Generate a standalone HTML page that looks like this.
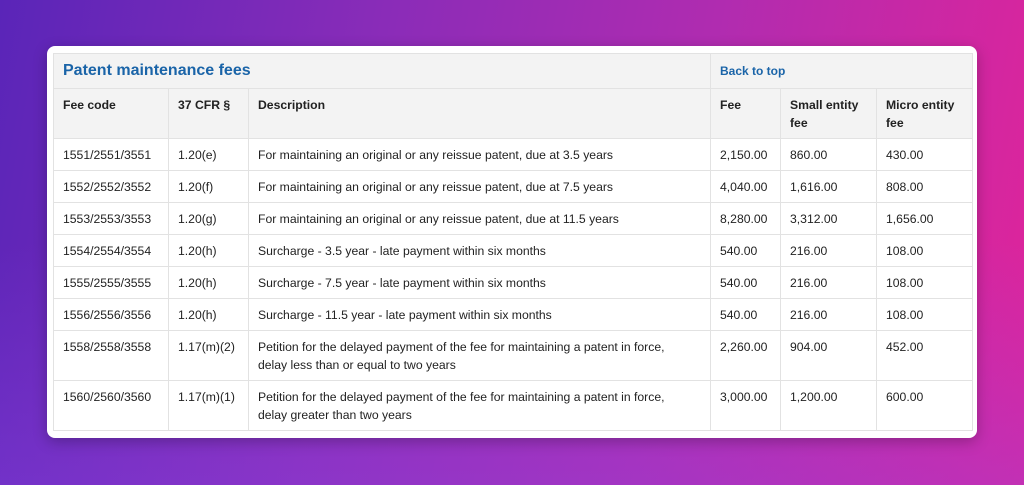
<!DOCTYPE html>
<html><head><style>
html,body{margin:0;width:1024px;height:485px;overflow:hidden;}
body{background:linear-gradient(100deg,#5a25b8 0%,#8a2cb8 35%,#b02cb0 65%,#e0249a 100%);position:relative;font-family:"Liberation Sans",sans-serif;}
.ov{position:absolute;inset:0;background:linear-gradient(180deg,rgba(0,0,0,0) 50%,rgba(140,70,230,0.35) 100%);}
.card{position:absolute;left:47px;top:46px;width:930px;height:392px;background:#fff;border-radius:8px;box-shadow:0 4px 14px rgba(0,0,0,0.25);}
table{position:absolute;left:6px;top:7px;border-collapse:collapse;font-size:12.2px;color:#222;table-layout:fixed;}
td,th{border:1px solid #e2e2e2;padding:0 0 0 9px;text-align:left;vertical-align:top;line-height:18px;}
th{background:#f3f3f3;font-weight:bold;padding-top:7px;}
tr.t td{background:#f3f3f3;height:34px;vertical-align:middle;padding-top:0}
tr.h th{height:42px;}
tr.r td{height:31px;vertical-align:middle;}
tr.r2 td{height:42px;padding-top:7px;}
.title{color:#1a64a8;font-size:16px;font-weight:bold;}
.btt{color:#1a64a8;font-weight:bold;font-size:12px;}
</style></head><body><div class="ov"></div>
<div class="card"><table>
<colgroup><col style="width:115px"><col style="width:80px"><col style="width:462px"><col style="width:70px"><col style="width:96px"><col style="width:96px"></colgroup>
<tr class="t"><td colspan="3" class="title">Patent maintenance fees</td><td colspan="3" class="btt">Back to top</td></tr>
<tr class="h"><th>Fee code</th><th>37 CFR §</th><th>Description</th><th>Fee</th><th>Small entity fee</th><th>Micro entity fee</th></tr>
<tr class="r"><td>1551/2551/3551</td><td>1.20(e)</td><td>For maintaining an original or any reissue patent, due at 3.5 years</td><td>2,150.00</td><td>860.00</td><td>430.00</td></tr>
<tr class="r"><td>1552/2552/3552</td><td>1.20(f)</td><td>For maintaining an original or any reissue patent, due at 7.5 years</td><td>4,040.00</td><td>1,616.00</td><td>808.00</td></tr>
<tr class="r"><td>1553/2553/3553</td><td>1.20(g)</td><td>For maintaining an original or any reissue patent, due at 11.5 years</td><td>8,280.00</td><td>3,312.00</td><td>1,656.00</td></tr>
<tr class="r"><td>1554/2554/3554</td><td>1.20(h)</td><td>Surcharge - 3.5 year - late payment within six months</td><td>540.00</td><td>216.00</td><td>108.00</td></tr>
<tr class="r"><td>1555/2555/3555</td><td>1.20(h)</td><td>Surcharge - 7.5 year - late payment within six months</td><td>540.00</td><td>216.00</td><td>108.00</td></tr>
<tr class="r"><td>1556/2556/3556</td><td>1.20(h)</td><td>Surcharge - 11.5 year - late payment within six months</td><td>540.00</td><td>216.00</td><td>108.00</td></tr>
<tr class="r2"><td>1558/2558/3558</td><td>1.17(m)(2)</td><td>Petition for the delayed payment of the fee for maintaining a patent in force,<br>delay less than or equal to two years</td><td>2,260.00</td><td>904.00</td><td>452.00</td></tr>
<tr class="r2"><td>1560/2560/3560</td><td>1.17(m)(1)</td><td>Petition for the delayed payment of the fee for maintaining a patent in force,<br>delay greater than two years</td><td>3,000.00</td><td>1,200.00</td><td>600.00</td></tr>
</table></div>
</body></html>
